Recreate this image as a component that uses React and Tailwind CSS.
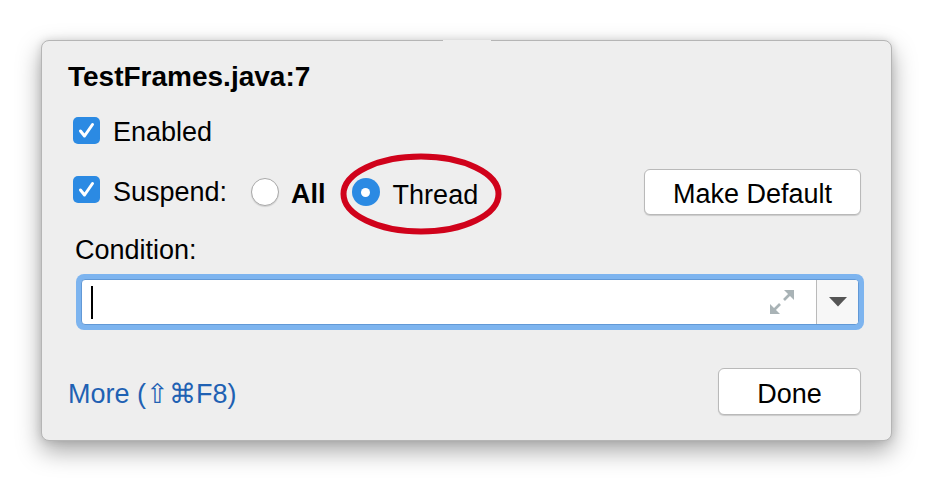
import React from "react";

function Checkbox() {
  return (
    <div className="flex h-[27px] w-[27px] shrink-0 items-center justify-center rounded-[5px] bg-[#2b8ae3]">
      <svg width="27" height="27" viewBox="0 0 27 27">
        <path d="M7.5 14 L11.5 19 L19.5 7.5" fill="none" stroke="#ffffff" strokeWidth="3" strokeLinecap="round" strokeLinejoin="round" />
      </svg>
    </div>
  );
}

function RadioOff() {
  return (
    <div className="h-[28px] w-[28px] shrink-0 rounded-full border border-[#a9a9a9] bg-white shadow-[0_1px_1px_rgba(0,0,0,0.12)]" />
  );
}

function RadioOn() {
  return (
    <div className="flex h-[28px] w-[28px] shrink-0 items-center justify-center rounded-full bg-[#2b8ae3]">
      <div className="h-[9px] w-[9px] rounded-full bg-white" />
    </div>
  );
}

function Button({ children, className }) {
  return (
    <div
      className={
        "flex items-center justify-center rounded-[6px] border border-[#b9b9b9] bg-white pt-[4px] text-[27px] leading-[32px] text-black shadow-[0_1px_1px_rgba(0,0,0,0.15)] " +
        className
      }
    >
      {children}
    </div>
  );
}

export default function App() {
  return (
    <div className="h-[482px] w-[932px] overflow-hidden bg-white pl-[41px] pt-[40px] font-['Liberation_Sans',Arial,sans-serif] text-black">
      <div className="relative flex h-[401px] w-[851px] flex-col rounded-[8px] border border-[#b5b5b5] bg-[#eeeeee] pl-[26px] pr-[30px] pt-[20px] shadow-[0_10px_25px_rgba(0,0,0,0.35),0_0_8px_rgba(0,0,0,0.12)]">
        {/* notch over top border */}
        <div className="absolute left-[401px] top-[-1px] h-[2px] w-[48px] bg-[#eeeeee]" />

        {/* Title */}
        <div className="text-[28px] font-bold leading-[32px]">TestFrames.java:7</div>

        {/* Enabled */}
        <div className="ml-[5px] mt-[23px] flex h-[28px] items-center gap-[13px]">
          <Checkbox />
          <span className="pt-[4px] text-[27px] leading-[32px]">Enabled</span>
        </div>

        {/* Suspend row */}
        <div className="ml-[5px] mt-[25px] flex h-[46px] items-center">
          <div className="mb-[5px] flex items-center gap-[13px]">
            <Checkbox />
            <span className="pt-[4px] text-[27px] leading-[32px]">Suspend:</span>
          </div>
          <div className="ml-[24px] flex items-center gap-[12px]">
            <RadioOff />
            <span className="pt-[4px] text-[27px] font-bold leading-[32px]">All</span>
          </div>
          <div className="ml-[26px] flex items-center gap-[13px]">
            <RadioOn />
            <span className="pt-[5px] text-[27px] leading-[32px]">Thread</span>
          </div>
          <Button className="ml-auto h-[46px] w-[217px]">Make Default</Button>
        </div>

        {/* Condition */}
        <div className="ml-[7px] mt-[19px] text-[27px] leading-[32px]">Condition:</div>

        {/* Input */}
        <div className="ml-[8px] mt-[8px] h-[56px] w-[788px] rounded-[8px] bg-[#7db4ef] p-[5px]">
          <div className="flex h-[46px] items-stretch overflow-hidden rounded-[4px] border border-[#6299d6] bg-white">
            <div className="flex flex-1 items-center pl-[9px] pr-[22px]">
              <div className="h-[33px] w-[2px] bg-black" />
              <div className="flex-1" />
              <svg width="24" height="24" viewBox="0 0 24 24">
                <polygon points="14,0 24,0 24,10" fill="#a9b3b6" />
                <line x1="20" y1="4" x2="14" y2="10" stroke="#a9b3b6" strokeWidth="2.6" />
                <polygon points="0,14 0,24 10,24" fill="#a9b3b6" />
                <line x1="4" y1="20" x2="10" y2="14" stroke="#a9b3b6" strokeWidth="2.6" />
              </svg>
            </div>
            <div className="w-px bg-[#bababa]" />
            <div className="flex w-[41px] items-center justify-center bg-[#f7f7f7]">
              <svg width="18" height="10" viewBox="0 0 18 10">
                <polygon points="0,0 18,0 9,9.5" fill="#555555" />
              </svg>
            </div>
          </div>
        </div>

        {/* Footer */}
        <div className="mt-[38px] flex h-[47px] items-center">
          <span className="pt-[5px] text-[27px] leading-[32px] text-[#1f61b3]">
            More (⇧⌘F8)
          </span>
          <Button className="ml-auto h-[47px] w-[143px]">Done</Button>
        </div>

        {/* Red annotation ellipse */}
        <svg
          className="pointer-events-none absolute left-[298px] top-[112px]"
          width="162"
          height="82"
          viewBox="0 0 162 82"
        >
          <ellipse cx="81" cy="41" rx="77.5" ry="37.5" fill="none" stroke="#d0021b" strokeWidth="6" />
        </svg>
      </div>
    </div>
  );
}
